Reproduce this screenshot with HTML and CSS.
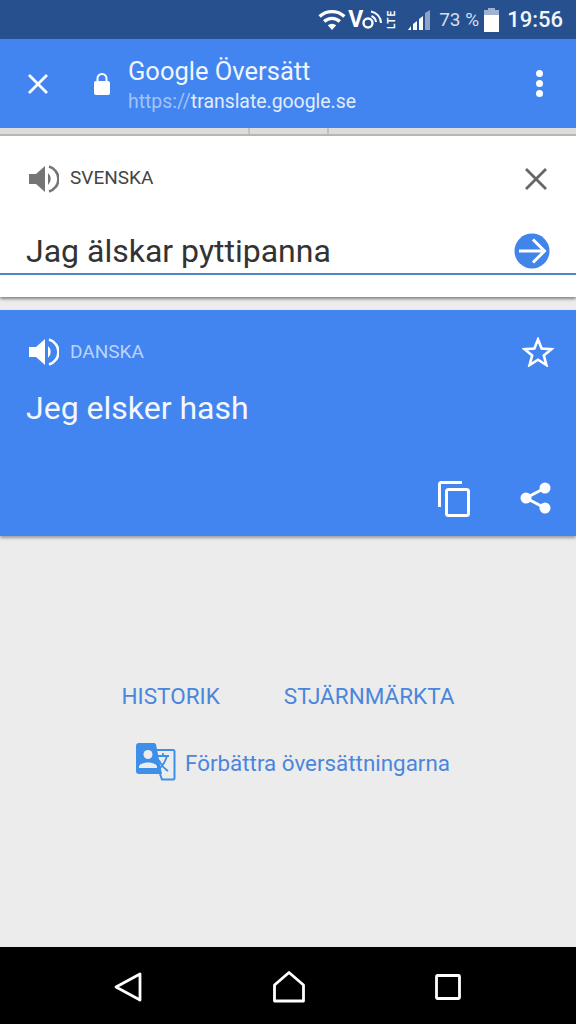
FILE: index.html
```html
<!DOCTYPE html>
<html lang="sv">
<head>
<meta charset="UTF-8" />
<title>Google Översätt</title>
<link rel="stylesheet" href="styles.css">
</head>
<body>
<div class="phone">
    <div class="status-bar">
        <svg class="st-wifi" width="28" height="22" viewBox="0 0 28 22">
            <path d="M14 21 L9.800 16.200 A6.400 6.400 0 0 1 18.200 16.200 Z" fill="#fff"/>
            <path d="M6.200 12.400 A11.500 11.500 0 0 1 21.800 12.400" fill="none" stroke="#fff" stroke-width="3.400"/>
            <path d="M1.600 7.400 A18.400 18.400 0 0 1 26.400 7.400" fill="none" stroke="#fff" stroke-width="3.400"/>
        </svg>
        <span class="st-volte">V</span>
        <svg class="st-volte-icon" width="35" height="24" viewBox="0 0 35 24">
            <circle cx="6" cy="15" r="4.500" fill="none" stroke="#fff" stroke-width="2.400"/>
            <path d="M9 3.500 A12 12 0 0 1 19 15 M9.500 8 A7.500 7.500 0 0 1 14 14" fill="none" stroke="#fff" stroke-width="2"/>
            <text class="st-lte" transform="translate(33 21) rotate(-90)">LTE</text>
        </svg>
        <svg class="st-signal" width="24" height="24" viewBox="0 0 24 24">
            <path d="M23 2 V22 H18 V5 Z" fill="#8ea3c6"/>
            <path d="M16 8 V22 H12 V11 Z M10 13 V22 H6 V16 Z M4 18 V22 H1 Z" fill="#fff"/>
        </svg>
        <span class="st-battery-text">73 %</span>
        <svg class="st-battery" width="15" height="24" viewBox="0 0 15 24">
            <path d="M4 0 H11 V2 H15 V24 H0 V2 H4 Z" fill="#fff"/>
            <path d="M0 2 H15 V7 H0 Z M4 0 H11 V2 H4 Z" fill="#9fb2d2"/>
        </svg>
        <span class="st-time">19:56</span>
    </div>

    <div class="toolbar">
        <svg class="tb-close" width="24" height="24" viewBox="0 0 24 24">
            <path d="M3 3 L21 21 M21 3 L3 21" stroke="#fff" stroke-width="2.800" fill="none"/>
        </svg>
        <svg class="tb-lock" width="18" height="24" viewBox="0 0 18 24">
            <path d="M4.500 9 V6.500 A4.500 4.500 0 0 1 13.500 6.500 V9" fill="none" stroke="#fff" stroke-width="2"/>
            <rect x="1" y="9" width="16" height="14" rx="2" fill="#fff"/>
        </svg>
        <div class="tb-titles">
            <div class="tb-title">Google Översätt</div>
            <div class="tb-url"><span class="tb-scheme">https://</span>translate.google.se</div>
        </div>
        <div class="tb-menu"><i></i><i></i><i></i></div>
    </div>

    <div class="tabs-strip"><i></i><i></i></div>

    <div class="source-card">
        <div class="lang-row">
            <svg class="speaker" width="32" height="32" viewBox="0 0 32 32">
                <path d="M2 11 H9 L18 3 V29 L9 21 H2 Z" fill="#757575"/>
                <path d="M21 10 A8 8 0 0 1 21 22 Z" fill="#757575"/>
                <path d="M22 3.500 A13 13 0 0 1 22 28.500" fill="none" stroke="#757575" stroke-width="2.600"/>
            </svg>
            <span class="lang-name">SVENSKA</span>
            <svg class="source-clear" width="24" height="24" viewBox="0 0 24 24">
                <path d="M2 2 L22 22 M22 2 L2 22" stroke="#666" stroke-width="2.800" fill="none"/>
            </svg>
        </div>
        <div class="input-row">
            <span class="source-text">Jag älskar pyttipanna</span>
            <svg class="go" width="36" height="36" viewBox="0 0 36 36">
                <circle cx="18" cy="18" r="17.500" fill="#4285ea"/>
                <path d="M5 18 H30 M19 6.500 L30.500 18 L19 29.500" fill="none" stroke="#fff" stroke-width="3"/>
            </svg>
        </div>
    </div>

    <div class="result-card">
        <div class="lang-row result-lang">
            <svg class="speaker" width="32" height="32" viewBox="0 0 32 32">
                <path d="M2 11 H9 L18 3 V29 L9 21 H2 Z" fill="#fff"/>
                <path d="M21 10 A8 8 0 0 1 21 22 Z" fill="#fff"/>
                <path d="M22 3.500 A13 13 0 0 1 22 28.500" fill="none" stroke="#fff" stroke-width="2.600"/>
            </svg>
            <span class="lang-name">DANSKA</span>
            <svg class="star" width="32" height="30" viewBox="0 0 32 30">
                <path d="M16 2.500 L19.600 11.600 L29.500 12.200 L21.800 18.400 L24.400 28 L16 22.700 L7.600 28 L10.200 18.400 L2.500 12.200 L12.400 11.600 Z" fill="none" stroke="#fff" stroke-width="2.600"/>
            </svg>
        </div>
        <div class="result-text">Jeg elsker hash</div>
        <div class="result-actions">
            <svg width="32" height="36" viewBox="0 0 32 36">
                <path d="M1.500 26 V3 A1.500 1.500 0 0 1 3 1.500 H24" fill="none" stroke="#fff" stroke-width="3"/>
                <rect x="8.500" y="8.500" width="22" height="26" rx="2" fill="none" stroke="#fff" stroke-width="3"/>
            </svg>
            <svg class="share" width="32" height="34" viewBox="0 0 32 34">
                <path d="M25 7 L6 17 L25 27" fill="none" stroke="#fff" stroke-width="3"/>
                <circle cx="25" cy="7" r="5.500" fill="#fff"/>
                <circle cx="6" cy="17" r="5.500" fill="#fff"/>
                <circle cx="25" cy="27" r="5.500" fill="#fff"/>
            </svg>
        </div>
    </div>

    <div class="links">
        <div class="links-row">
            <span>HISTORIK</span>
            <span>STJÄRNMÄRKTA</span>
        </div>
        <div class="improve">
            <svg width="40" height="40" viewBox="0 0 40 40">
                <path d="M14 8 H37 A1.500 1.500 0 0 1 38.500 9.500 V36 A1.500 1.500 0 0 1 37 37.500 H26 L24 32" fill="none" stroke="#3d8fe8" stroke-width="2"/>
                <path d="M3 1 H18 A2 2 0 0 1 20 2.500 L26 32 H3 A3 3 0 0 1 0 29 V4 A3 3 0 0 1 3 1 Z" fill="#3d8fe8"/>
                <circle cx="12" cy="12.500" r="4.500" fill="#ececec"/>
                <path d="M3 25 C3 19 21 19 21 25 V26 H3 Z" fill="#ececec"/>
                <path d="M21 14 H33 M27 11 V14 M31 14 C29 21 25 26 20 29 M23 18 C25 23 29 27 32 29" fill="none" stroke="#3d8fe8" stroke-width="1.800"/>
            </svg>
            <span class="improve-text">Förbättra översättningarna</span>
        </div>
    </div>

    <div class="nav-bar">
        <svg width="28" height="30" viewBox="0 0 28 30">
            <path d="M26 2 V28 L2 15 Z" fill="none" stroke="#fff" stroke-width="2.800" stroke-linejoin="round"/>
        </svg>
        <svg width="32" height="32" viewBox="0 0 32 32">
            <path d="M1.500 14 L16 1.500 L30.500 14 V30 H1.500 Z" fill="none" stroke="#fff" stroke-width="2.800" stroke-linejoin="round"/>
        </svg>
        <svg width="26" height="26" viewBox="0 0 26 26">
            <rect x="1.500" y="1.500" width="23" height="23" rx="1" fill="none" stroke="#fff" stroke-width="2.800"/>
        </svg>
    </div>
</div>
</body>
</html>
```

FILE: styles.css
```css
* {
    box-sizing: border-box;
}
body, html {
    margin: 0;
    height: 100%;
    font-family: Roboto, Arial, sans-serif;
}
svg {
    display: block;
    flex: none;
}
.phone {
    width: 576px;
    height: 1024px;
    display: flex;
    flex-direction: column;
    background: #ececec;
    overflow: hidden;
}

/* status bar */
.status-bar {
    height: 39px;
    background: #27508f;
    color: #fff;
    display: flex;
    align-items: center;
    justify-content: flex-end;
    padding-right: 13px;
}
.st-wifi {
    margin-right: 2px;
}
.st-volte {
    font-size: 23px;
    font-weight: 700;
    line-height: 1;
    margin-right: -1px;
}
.st-volte-icon {
    margin-right: 10px;
}
.st-lte {
    font-family: Roboto, Arial, sans-serif;
    font-size: 10px;
    font-weight: 700;
    letter-spacing: 1px;
    fill: #fff;
}
.st-signal {
    margin-right: 8px;
}
.st-battery-text {
    font-size: 19px;
    color: #d5deec;
    margin-right: 5px;
}
.st-battery {
    margin-right: 8px;
}
.st-time {
    font-size: 22px;
    font-weight: 500;
    color: #f2f5fa;
}

/* chrome custom tab toolbar */
.toolbar {
    height: 89px;
    background: #4285f0;
    color: #fff;
    display: flex;
    align-items: center;
    padding-left: 26px;
}
.tb-close {
    margin-right: 43px;
}
.tb-lock {
    margin-right: 17px;
    margin-top: 1px;
}
.tb-titles {
    flex: 1;
    margin-top: 2px;
}
.tb-title {
    font-size: 25.500px;
    line-height: 32px;
    color: #f0f5fe;
}
.tb-url {
    font-size: 19.400px;
    line-height: 26px;
    margin-top: 2px;
    color: #e3ecfc;
}
.tb-scheme {
    color: #a3c2f7;
}
.tb-menu {
    display: flex;
    flex-direction: column;
    gap: 3px;
    margin-right: 33px;
}
.tb-menu i {
    display: block;
    width: 7px;
    height: 7px;
    border-radius: 50%;
    background: #fff;
}

.tabs-strip {
    height: 8px;
    background: #dcdcda;
    border-bottom: 2px solid #b9b9b5;
    display: flex;
    padding-left: 248px;
    gap: 77px;
}
.tabs-strip i {
    display: block;
    width: 2px;
    height: 6px;
    background: #c2c2be;
}

/* source card */
.source-card {
    height: 161px;
    background: #fff;
    box-shadow: 0 2px 3px rgba(0, 0, 0, 0.45);
    padding-top: 27px;
}
.lang-row {
    display: flex;
    align-items: center;
    padding-left: 27px;
    padding-right: 28px;
}
.speaker {
    margin-right: 11px;
}
.lang-name {
    flex: 1;
    font-size: 19px;
    color: #444;
    margin-top: -4px;
}
.input-row {
    height: 46px;
    margin-top: 34px;
    border-bottom: 2px solid #4f86c6;
    display: flex;
    align-items: center;
    justify-content: space-between;
    padding-left: 26px;
    padding-right: 26px;
}
.source-text {
    font-size: 32px;
    color: #333;
}

/* result card */
.result-card {
    height: 226px;
    margin-top: 13px;
    background: #4285f0;
    box-shadow: 0 2px 3px rgba(0, 0, 0, 0.35);
    padding-top: 26px;
    color: #fff;
}
.result-lang {
    padding-right: 22px;
}
.result-lang .lang-name {
    color: #bcd4fa;
    margin-top: -2px;
}
.result-text {
    font-size: 32px;
    line-height: 40px;
    margin-top: 20px;
    padding-left: 26px;
    color: #f4f8fe;
}
.result-actions {
    display: flex;
    justify-content: flex-end;
    align-items: center;
    gap: 50px;
    margin-top: 53px;
    padding-right: 24px;
}
.share {
    margin-top: -2px;
}

/* links */
.links {
    flex: 1;
    padding-top: 146px;
    color: #4a86dc;
}
.links-row {
    display: flex;
    justify-content: center;
    gap: 64px;
    font-size: 22.500px;
    line-height: 28px;
}
.improve {
    display: flex;
    align-items: center;
    justify-content: center;
    gap: 9px;
    margin-top: 32px;
    font-size: 22.400px;
    padding-left: 10px;
}
.improve-text {
    margin-top: 1px;
}

/* android nav */
.nav-bar {
    height: 77px;
    background: #000;
    display: flex;
    align-items: center;
    justify-content: space-between;
    padding: 2px 115px 0 114px;
}
```
